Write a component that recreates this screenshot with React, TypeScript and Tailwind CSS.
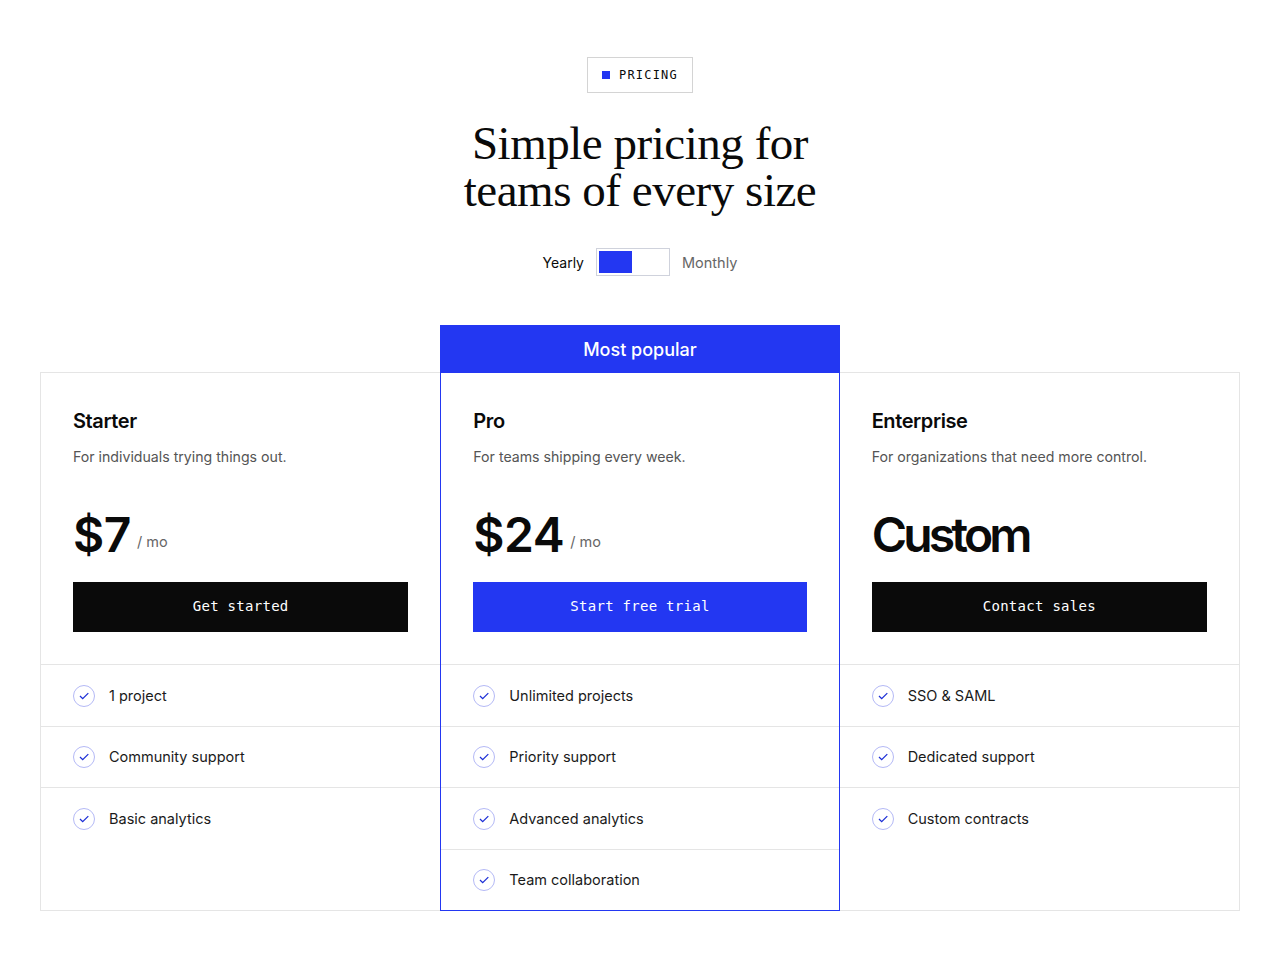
const BLUE = "bg-[#2337f2]";

type Plan = {
  name: string;
  blurb: string;
  price: string;
  per?: boolean;
  cta: string;
  features: string[];
  popular?: boolean;
};

const plans: Plan[] = [
  {
    name: "Starter",
    blurb: "For individuals trying things out.",
    price: "$7",
    per: true,
    cta: "Get started",
    features: ["1 project", "Community support", "Basic analytics"],
  },
  {
    name: "Pro",
    blurb: "For teams shipping every week.",
    price: "$24",
    per: true,
    cta: "Start free trial",
    features: ["Unlimited projects", "Priority support", "Advanced analytics", "Team collaboration"],
    popular: true,
  },
  {
    name: "Enterprise",
    blurb: "For organizations that need more control.",
    price: "Custom",
    cta: "Contact sales",
    features: ["SSO & SAML", "Dedicated support", "Custom contracts"],
  },
];

function CheckIcon() {
  return (
    <span className="flex h-[22px] w-[22px] shrink-0 items-center justify-center rounded-full border border-[#b4b9f6]">
      <svg width="12" height="12" viewBox="0 0 12 12" fill="none">
        <path d="M2 6 L4.7 8.7 L10.3 3.1" stroke="#1d2fd6" strokeWidth="1.3" />
      </svg>
    </span>
  );
}

function PlanColumn({ plan }: { plan: Plan }) {
  return (
    <div className={plan.popular ? "relative -my-px flex flex-col border border-[#2337f2]" : "flex flex-col"}>
      {plan.popular && (
        <div className={`absolute -left-px -right-px -top-[48px] flex h-[48px] items-center justify-center ${BLUE} text-[18px] font-medium text-white`}>
          Most popular
        </div>
      )}
      <div className="px-8 pt-8 pb-8">
        <h3 className="text-[20px] leading-[32px] font-semibold tracking-[-0.02em] text-[#0a0a0a]">{plan.name}</h3>
        <p className="mt-[9px] text-[14.15px] leading-[22px] text-[#555555]">{plan.blurb}</p>
        <div className="mt-[37px] flex h-[60px] items-end gap-[6px]">
          <span
            className={
              plan.per
                ? "text-[48px] leading-[60px] font-semibold tracking-[-0.01em] text-[#0a0a0a]"
                : "text-[48px] leading-[60px] font-semibold tracking-[-0.08em] text-[#0a0a0a]"
            }
          >
            {plan.price}
          </span>
          {plan.per && <span className="pb-[12px] text-[14.5px] leading-[22px] text-[#666666]">/ mo</span>}
        </div>
        <button
          className={`mt-[17px] flex h-[50px] w-full items-center justify-center pb-[2px] font-['DejaVu_Sans_Mono',monospace] text-[14px] tracking-[0.02em] text-white ${
            plan.popular ? BLUE : "bg-[#0a0a0a]"
          }`}
        >
          {plan.cta}
        </button>
      </div>
      <ul>
        {plan.features.map((f) => (
          <li
            key={f}
            className="flex items-center gap-[14px] border-t border-[#e5e5e5] px-8 pt-[19.75px] pb-[18.75px] text-[14.5px] leading-[20.5px] text-[#1a1a1a]"
          >
            <CheckIcon />
            {f}
          </li>
        ))}
      </ul>
    </div>
  );
}

export default function App() {
  return (
    <div className="min-h-[960px] bg-white px-10 pt-[57px] font-['Inter',sans-serif]">
      <div className="flex flex-col items-center">
        <div className="flex h-[36px] w-[106px] items-center justify-center gap-[9px] border border-[#d4d4d4] font-['DejaVu_Sans_Mono',monospace] text-[12px] tracking-[0.1em] text-[#0a0a0a]">
          <span className={`h-2 w-2 ${BLUE}`} />
          PRICING
        </div>
        <h1 className="mt-[27px] text-center font-['Liberation_Serif',serif] text-[47px] leading-[47px] font-normal tracking-[-0.01em] text-[#0a0a0a]">
          Simple pricing for
          <br />
          teams of every size
        </h1>
        <div className="mt-[34px] flex items-center gap-3 text-[14.5px] leading-[26px]">
          <span className="pt-[2px] text-[14px] text-[#0a0a0a]">Yearly</span>
          <div className="h-[28px] w-[74px] border border-[#cfd2dc] p-[2px]">
            <div className={`h-full w-[33px] ${BLUE}`} />
          </div>
          <span className="pt-[2px] text-[#666666]">Monthly</span>
        </div>
      </div>
      <div className="mt-[96px] grid h-[539px] grid-cols-3 border border-[#e5e5e5]">
        {plans.map((p) => (
          <PlanColumn key={p.name} plan={p} />
        ))}
      </div>
    </div>
  );
}
